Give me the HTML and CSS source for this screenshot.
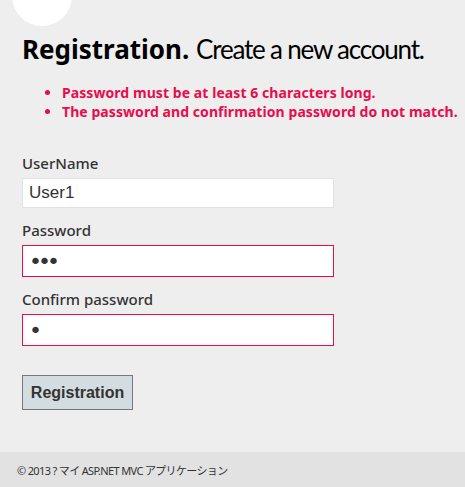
FILE: index.html
```html
<!DOCTYPE html>
<html lang="ja">
<head>
<meta charset="utf-8">
<title>Registration</title>
<link rel="stylesheet" href="styles.css">
</head>
<body>
<div class="page">
  <div class="logo"></div>
  <main class="content">
    <h1 class="title"><strong class="strong">Registration.</strong> <span class="sub">Create a new account.</span></h1>
    <ul class="errors">
      <li>Password must be at least 6 characters long.</li>
      <li>The password and confirmation password do not match.</li>
    </ul>
    <form class="form">
      <div class="field">
        <label class="label" for="un">UserName</label>
        <input class="input" id="un" type="text" value="User1">
      </div>
      <div class="field">
        <label class="label" for="pw">Password</label>
        <input class="input invalid pass" id="pw" type="password" value="abc">
      </div>
      <div class="field">
        <label class="label" for="cpw">Confirm password</label>
        <input class="input invalid pass" id="cpw" type="password" value="a">
      </div>
      <button class="btn" type="button">Registration</button>
    </form>
  </main>
  <footer class="footer">© 2013 ? マイ ASP.NET MVC アプリケーション</footer>
</div>
</body>
</html>
```

FILE: styles.css
```css
html, body {
  margin: 0;
  padding: 0;
  background: #eeeeee;
}
.page {
  position: relative;
  min-height: 487px;
  display: flex;
  flex-direction: column;
  font-family: "Noto Sans", "Open Sans", sans-serif;
  color: #333333;
  overflow: hidden;
}
.logo {
  position: absolute;
  left: 12px;
  top: -34px;
  width: 60px;
  height: 60px;
  border-radius: 50%;
  background: #ffffff;
}
.content {
  flex: 1;
  padding: 34px 22px 0 22px;
}
.title {
  margin: 0;
  font-size: 26px;
  line-height: 31px;
  font-weight: 400;
  color: #000000;
  white-space: nowrap;
}
.strong {
  font-family: "Noto Sans", sans-serif;
  font-weight: 700;
}
.sub {
  font-family: Lato, sans-serif;
  letter-spacing: -1.2px;
}
.errors {
  margin: 18px 0 0 0;
  padding-left: 40px;
  color: #e80c4d;
  font-size: 14px;
  line-height: 19px;
  font-weight: 700;
  letter-spacing: 0.07px;
  white-space: nowrap;
}
.form {
  display: flex;
  flex-direction: column;
  align-items: flex-start;
  margin-top: 32px;
}
.field {
  display: flex;
  flex-direction: column;
  gap: 5px;
  margin-bottom: 12px;
}
.label {
  font-size: 15px;
  line-height: 20px;
  font-weight: 500;
  color: #333333;
}
.input {
  box-sizing: border-box;
  width: 312px;
  height: 30px;
  margin: 0;
  padding: 0 6px;
  border: 1px solid #e2e2e2;
  background: #ffffff;
  font-family: "Liberation Sans", Arial, sans-serif;
  font-size: 17px;
  color: #333333;
  outline: none;
}
.input.invalid {
  height: 32px;
  border-color: #e80c4d;
}
.input.pass {
  font-family: "DejaVu Sans", sans-serif;
  font-size: 22px;
  letter-spacing: -4px;
}
.btn {
  box-sizing: border-box;
  margin-top: 17px;
  width: 111px;
  height: 35px;
  padding: 0;
  border: 1px solid #787878;
  background: #d3dce0;
  font-family: "Liberation Sans", Arial, sans-serif;
  font-size: 16px;
  font-weight: 700;
  color: #333333;
}
.footer {
  height: 35px;
  box-sizing: border-box;
  padding: 11px 17px 0 17px;
  background: #e2e2e2;
  font-family: "Noto Sans", "Noto Sans CJK JP", sans-serif;
  font-size: 11px;
  line-height: 15px;
  letter-spacing: -0.65px;
  color: #333333;
}
```
